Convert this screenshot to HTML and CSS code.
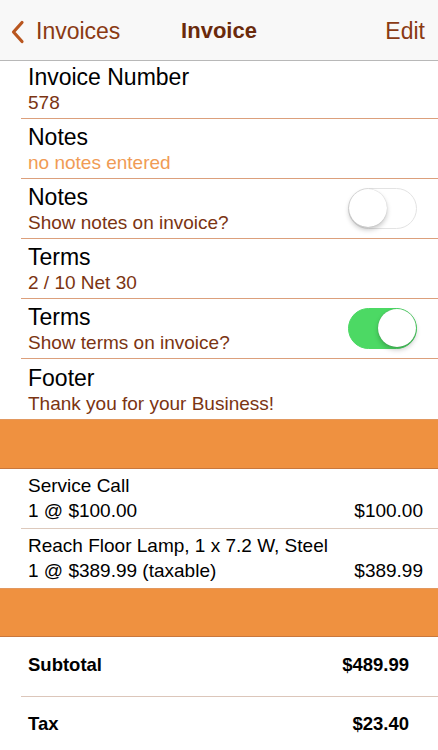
FILE: index.html
```html
<!DOCTYPE html>
<html>
<head>
<meta charset="utf-8">
<link rel="stylesheet" href="styles.css">
</head>
<body>
<div class="screen">
  <header class="nav">
    <div class="nav-left">
      <svg class="chev" width="16" height="24" viewBox="0 0 16 24"><path d="M12 2.5 L3.5 12 L12 21.5" fill="none" stroke="#b9561f" stroke-width="3.2" stroke-linecap="round" stroke-linejoin="round"/></svg>
      <span class="nav-link">Invoices</span>
    </div>
    <div class="nav-title">Invoice</div>
    <div class="nav-right"><span class="nav-link">Edit</span></div>
  </header>

  <div class="row row-first">
    <div class="texts">
      <div class="title">Invoice Number</div>
      <div class="sub">578</div>
    </div>
  </div>
  <div class="row">
    <div class="texts">
      <div class="title">Notes</div>
      <div class="sub sub-placeholder">no notes entered</div>
    </div>
  </div>
  <div class="row row-switch">
    <div class="texts">
      <div class="title">Notes</div>
      <div class="sub">Show notes on invoice?</div>
    </div>
    <div class="switch"><div class="knob"></div></div>
  </div>
  <div class="row">
    <div class="texts">
      <div class="title">Terms</div>
      <div class="sub">2 / 10 Net 30</div>
    </div>
  </div>
  <div class="row row-switch">
    <div class="texts">
      <div class="title">Terms</div>
      <div class="sub">Show terms on invoice?</div>
    </div>
    <div class="switch switch-on"><div class="knob"></div></div>
  </div>
  <div class="row row-last">
    <div class="texts">
      <div class="title">Footer</div>
      <div class="sub">Thank you for your Business!</div>
    </div>
  </div>

  <div class="band"></div>

  <div class="item">
    <div class="item-name">Service Call</div>
    <div class="item-line"><span>1 @ $100.00</span><span>$100.00</span></div>
  </div>
  <div class="item item-last">
    <div class="item-name">Reach Floor Lamp, 1 x 7.2 W, Steel</div>
    <div class="item-line"><span>1 @ $389.99 (taxable)</span><span>$389.99</span></div>
  </div>

  <div class="band band-second"></div>

  <div class="total">
    <span>Subtotal</span><span>$489.99</span>
  </div>
  <div class="total total-last">
    <span>Tax</span><span>$23.40</span>
  </div>
</div>
</body>
</html>
```

FILE: styles.css
```css
html, body {
  margin: 0;
  padding: 0;
  background: #ffffff;
}

body {
  font-family: "Liberation Sans", Arial, sans-serif;
  color: #000;
}

.screen {
  width: 438px;
  height: 750px;
  overflow: hidden;
  background: #ffffff;
}

.nav {
  box-sizing: border-box;
  padding-top: 18px;
  background: #f8f8f8;
  border-bottom: 1px solid #b8b8b8;
  height: 61px;
  display: grid;
  grid-template-columns: 1fr auto 1fr;
  align-items: start;
}

.nav-left {
  display: flex;
  align-items: center;
  padding-left: 10px;
  gap: 10px;
}

.chev {
  display: block;
  margin-top: 1px;
}

.nav-link {
  font-size: 23px;
  line-height: 26px;
  color: #8a3a13;
}

.nav-title {
  font-size: 22px;
  line-height: 26px;
  font-weight: bold;
  color: #6a2a0c;
}

.nav-right {
  display: flex;
  justify-content: flex-end;
  padding-right: 13px;
}

.row {
  margin-left: 21px;
  padding-left: 7px;
  padding-right: 21px;
  height: 60px;
  box-sizing: border-box;
  padding-top: 5px;
  border-bottom: 1px solid #dca07c;
  display: flex;
  justify-content: space-between;
}

.row-first {
  height: 58px;
  padding-top: 3px;
}

.row-last {
  border-bottom: none;
  padding-top: 6px;
}

.row-switch .switch {
  align-self: center;
  margin-top: -5px;
}

.title {
  font-size: 23px;
  line-height: 26px;
  color: #000;
}

.sub {
  font-size: 19px;
  line-height: 25px;
  color: #7b3412;
}

.sub-placeholder {
  color: #f09b55;
}

.switch {
  width: 69px;
  height: 41px;
  box-sizing: border-box;
  border-radius: 21px;
  border: 1.5px solid #e3e3e3;
  background: #ffffff;
  position: relative;
  flex: none;
}

.switch .knob {
  position: absolute;
  top: 0;
  left: 0;
  width: 38px;
  height: 38px;
  border-radius: 50%;
  background: #ffffff;
  box-shadow: 0 3px 5px rgba(0, 0, 0, 0.22), 0 0 1px rgba(0, 0, 0, 0.25);
}

.switch-on {
  background: #4cd964;
  border-color: #4cd964;
}

.switch-on .knob {
  left: auto;
  right: 0;
}

.band {
  height: 50px;
  box-sizing: border-box;
  background: #ef9140;
  border-top: 1px solid #e2985f;
  border-bottom: 1px solid #c9773c;
}

.band-second {
  height: 49px;
}

.item {
  margin-left: 21px;
  padding-left: 7px;
  padding-right: 15px;
  padding-top: 4px;
  height: 60px;
  box-sizing: border-box;
  border-bottom: 1px solid #ddc9bc;
  font-size: 19px;
  line-height: 25px;
  color: #000;
}

.item-last {
  border-bottom: none;
  height: 59px;
}

.item-line {
  display: flex;
  justify-content: space-between;
}

.total {
  margin-left: 21px;
  padding-left: 7px;
  padding-right: 29px;
  height: 60px;
  box-sizing: border-box;
  border-bottom: 1px solid #dcc6ba;
  display: flex;
  justify-content: space-between;
  align-items: center;
  font-size: 18.5px;
  line-height: 24px;
  font-weight: bold;
  padding-bottom: 3px;
}

.total-last {
  border-bottom: none;
  padding-bottom: 6px;
}
```
